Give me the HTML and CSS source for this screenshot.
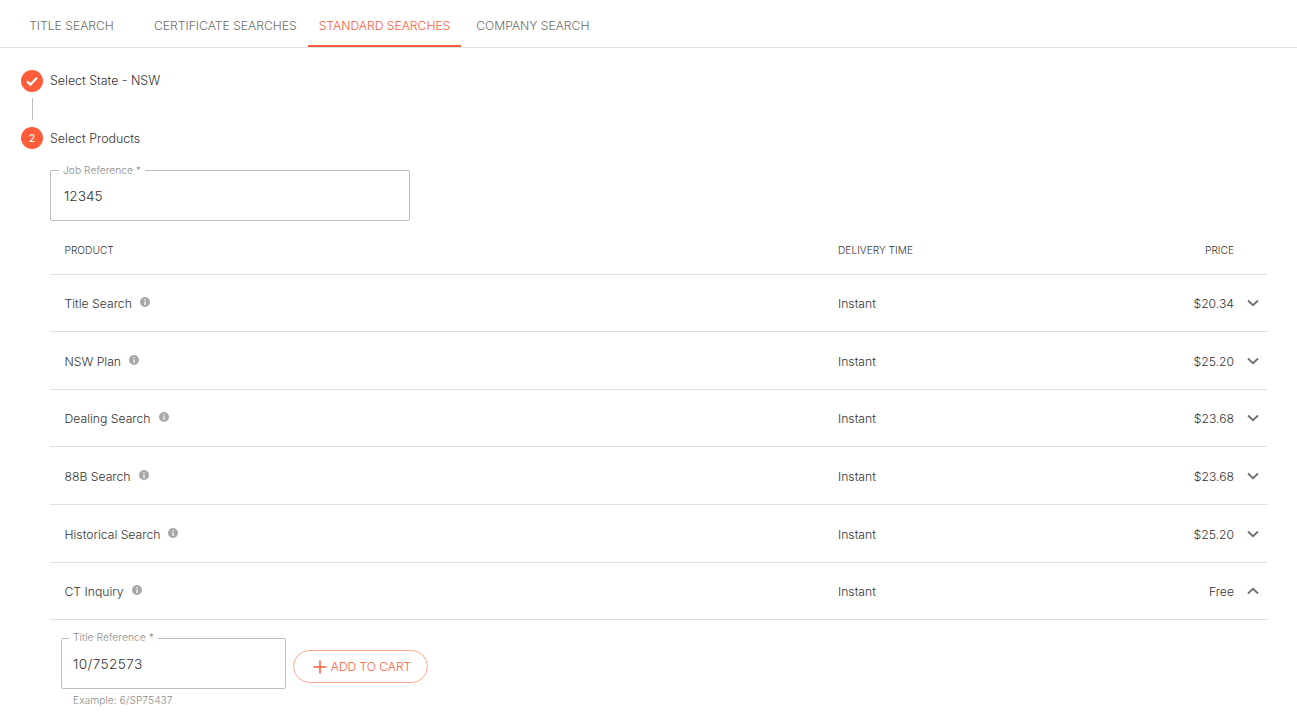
FILE: index.html
```html
<!DOCTYPE html>
<html lang="en">
<head>
<meta charset="utf-8">
<title>Standard Searches</title>
<link rel="stylesheet" href="styles.css">
</head>
<body>
<nav class="tabs">
  <a class="tab">TITLE SEARCH</a>
  <a class="tab">CERTIFICATE SEARCHES</a>
  <a class="tab active">STANDARD SEARCHES</a>
  <a class="tab">COMPANY SEARCH</a>
</nav>
<main class="stepper">
  <div class="step">
    <span class="badge"><svg width="14" height="14" viewBox="0 0 14 14"><path d="M2 7.4 5.4 10.6 12 3.8" fill="none" stroke="#fff" stroke-width="2.2"/></svg></span>
    <span class="step-label">Select State - NSW</span>
  </div>
  <div class="connector"></div>
  <div class="step">
    <span class="badge">2</span>
    <span class="step-label">Select Products</span>
  </div>
  <div class="step-body">
    <fieldset class="field job">
      <legend>Job Reference *</legend>
      <span class="value">12345</span>
    </fieldset>
    <div class="row head">
      <span class="c-product">PRODUCT</span>
      <span class="c-time">DELIVERY TIME</span>
      <span class="c-price">PRICE</span>
      <span class="c-icon"></span>
    </div>
    <div class="row">
      <span class="c-product">Title Search<svg class="info" viewBox="0 0 10 10"><circle cx="5" cy="5" r="5"/><path d="M4.4 2h1.2v1.2H4.4zM4.4 4.2h1.2V8H4.4z"/></svg></span>
      <span class="c-time">Instant</span><span class="c-price">$20.34</span>
      <span class="c-icon"><svg class="chev" viewBox="0 0 12 8"><path d="M1 1.5 6 6.2 11 1.5"/></svg></span>
    </div>
    <div class="row">
      <span class="c-product">NSW Plan<svg class="info" viewBox="0 0 10 10"><circle cx="5" cy="5" r="5"/><path d="M4.4 2h1.2v1.2H4.4zM4.4 4.2h1.2V8H4.4z"/></svg></span>
      <span class="c-time">Instant</span><span class="c-price">$25.20</span>
      <span class="c-icon"><svg class="chev" viewBox="0 0 12 8"><path d="M1 1.5 6 6.2 11 1.5"/></svg></span>
    </div>
    <div class="row">
      <span class="c-product">Dealing Search<svg class="info" viewBox="0 0 10 10"><circle cx="5" cy="5" r="5"/><path d="M4.4 2h1.2v1.2H4.4zM4.4 4.2h1.2V8H4.4z"/></svg></span>
      <span class="c-time">Instant</span><span class="c-price">$23.68</span>
      <span class="c-icon"><svg class="chev" viewBox="0 0 12 8"><path d="M1 1.5 6 6.2 11 1.5"/></svg></span>
    </div>
    <div class="row">
      <span class="c-product">88B Search<svg class="info" viewBox="0 0 10 10"><circle cx="5" cy="5" r="5"/><path d="M4.4 2h1.2v1.2H4.4zM4.4 4.2h1.2V8H4.4z"/></svg></span>
      <span class="c-time">Instant</span><span class="c-price">$23.68</span>
      <span class="c-icon"><svg class="chev" viewBox="0 0 12 8"><path d="M1 1.5 6 6.2 11 1.5"/></svg></span>
    </div>
    <div class="row">
      <span class="c-product">Historical Search<svg class="info" viewBox="0 0 10 10"><circle cx="5" cy="5" r="5"/><path d="M4.4 2h1.2v1.2H4.4zM4.4 4.2h1.2V8H4.4z"/></svg></span>
      <span class="c-time">Instant</span><span class="c-price">$25.20</span>
      <span class="c-icon"><svg class="chev" viewBox="0 0 12 8"><path d="M1 1.5 6 6.2 11 1.5"/></svg></span>
    </div>
    <div class="row">
      <span class="c-product">CT Inquiry<svg class="info" viewBox="0 0 10 10"><circle cx="5" cy="5" r="5"/><path d="M4.4 2h1.2v1.2H4.4zM4.4 4.2h1.2V8H4.4z"/></svg></span>
      <span class="c-time">Instant</span><span class="c-price">Free</span>
      <span class="c-icon"><svg class="chev" viewBox="0 0 12 8"><path d="M1 6.5 6 1.8 11 6.5"/></svg></span>
    </div>
    <div class="detail">
      <div class="detail-field">
        <fieldset class="field title-ref">
          <legend>Title Reference *</legend>
          <span class="value">10/752573</span>
        </fieldset>
        <p class="helper">Example: 6/SP75437</p>
      </div>
      <button class="add" type="button"><svg width="14" height="14" viewBox="0 0 14 14"><path d="M7 .5v13M.5 7h13" fill="none" stroke="#ff5c39" stroke-width="1.5"/></svg>ADD TO CART</button>
    </div>
  </div>
</main>
</body>
</html>
```
FILE: styles.css
```css
* { box-sizing: border-box; }
html, body { margin: 0; height: 100%; overflow: hidden; }
body {
  background: #fff;
  color: #333;
  font-family: Inter, "Liberation Sans", sans-serif;
  font-weight: 300;
  font-size: 12.2px;
}
.tabs {
  display: flex;
  height: 48px;
  border-bottom: 1px solid #e0e0e0;
}
.tab {
  min-width: 143px;
  height: 47px;
  padding: 4px 11px 0;
  display: flex;
  align-items: center;
  justify-content: center;
  white-space: nowrap;
  color: #6e6e6e;
  font-size: 12.15px;
}
.tab.active {
  color: #ff5c39;
  min-width: 153px;
  border-bottom: 2px solid #ff5c39;
  padding-top: 6px;
}
.stepper { padding: 21.5px 30px 0 21px; }
.step { display: flex; align-items: center; height: 22px; }
.badge {
  width: 22px;
  height: 22px;
  border-radius: 50%;
  background: #ff5c39;
  color: #fff;
  font-size: 10px;
  font-weight: 500;
  display: flex;
  align-items: center;
  justify-content: center;
  margin-right: 7px;
  flex: none;
}
.step-label { color: #333; font-size: 12.4px; }
.connector {
  width: 1px;
  height: 22px;
  margin: 6.5px 0 7px 11px;
  background: #bdbdbd;
}
.step-body { padding: 15px 0 0 29px; }
.field {
  margin: 0;
  border: 1px solid #bdbdbd;
  border-radius: 2px;
  min-inline-size: 0;
  display: block;
}
.field legend {
  font-size: 10.3px;
  line-height: 12px;
  color: #8c8c8c;
  padding: 0 4px;
  margin-left: -5px;
  white-space: nowrap;
}
.job { width: 360px; height: 57px; padding: 0 13px; }
.value { display: block; font-size: 13.6px; line-height: 20px; padding-top: 10px; color: #333; }
.row {
  display: flex;
  align-items: center;
  height: 57.6px;
  padding: 1.6px 0 0 14.5px;
  border-bottom: 1px solid #e0e0e0;
}
.row.head { height: 53.6px; font-size: 10.2px; padding-top: 5.5px; }
.c-product { width: 773.5px; display: flex; align-items: center; }
.c-time { flex: 1; }
.c-price { text-align: right; }
.c-icon { width: 33px; display: flex; justify-content: center; padding-left: 5px; }
.info { width: 10px; height: 10px; margin: -3px 0 0 8px; }
.info circle { fill: #a8a8a8; }
.info path { fill: #fff; }
.chev { width: 12px; height: 8px; margin-top: -1px; fill: none; stroke: #6e6e6e; stroke-width: 1.8; }
.detail {
  display: flex;
  align-items: flex-start;
  padding: 12px 0 0 11px;
}
.detail-field { width: 225px; margin-right: 7px; }
.title-ref { height: 57px; padding: 0 11px; }
.title-ref legend { margin-left: -4px; font-size: 10.4px; }
.title-ref .value { letter-spacing: .4px; }
.helper { margin: 5px 0 0 12px; font-size: 10.3px; line-height: 12px; color: #8c8c8c; }
.add {
  margin-top: 18px;
  width: 135px;
  height: 33px;
  border: 1px solid #ffa793;
  border-radius: 17px;
  background: #fff;
  color: #ff5c39;
  font: inherit;
  font-size: 12px;
  display: flex;
  align-items: center;
  justify-content: center;
  gap: 4px;
  padding: 0 0 0 3px;
}
```
